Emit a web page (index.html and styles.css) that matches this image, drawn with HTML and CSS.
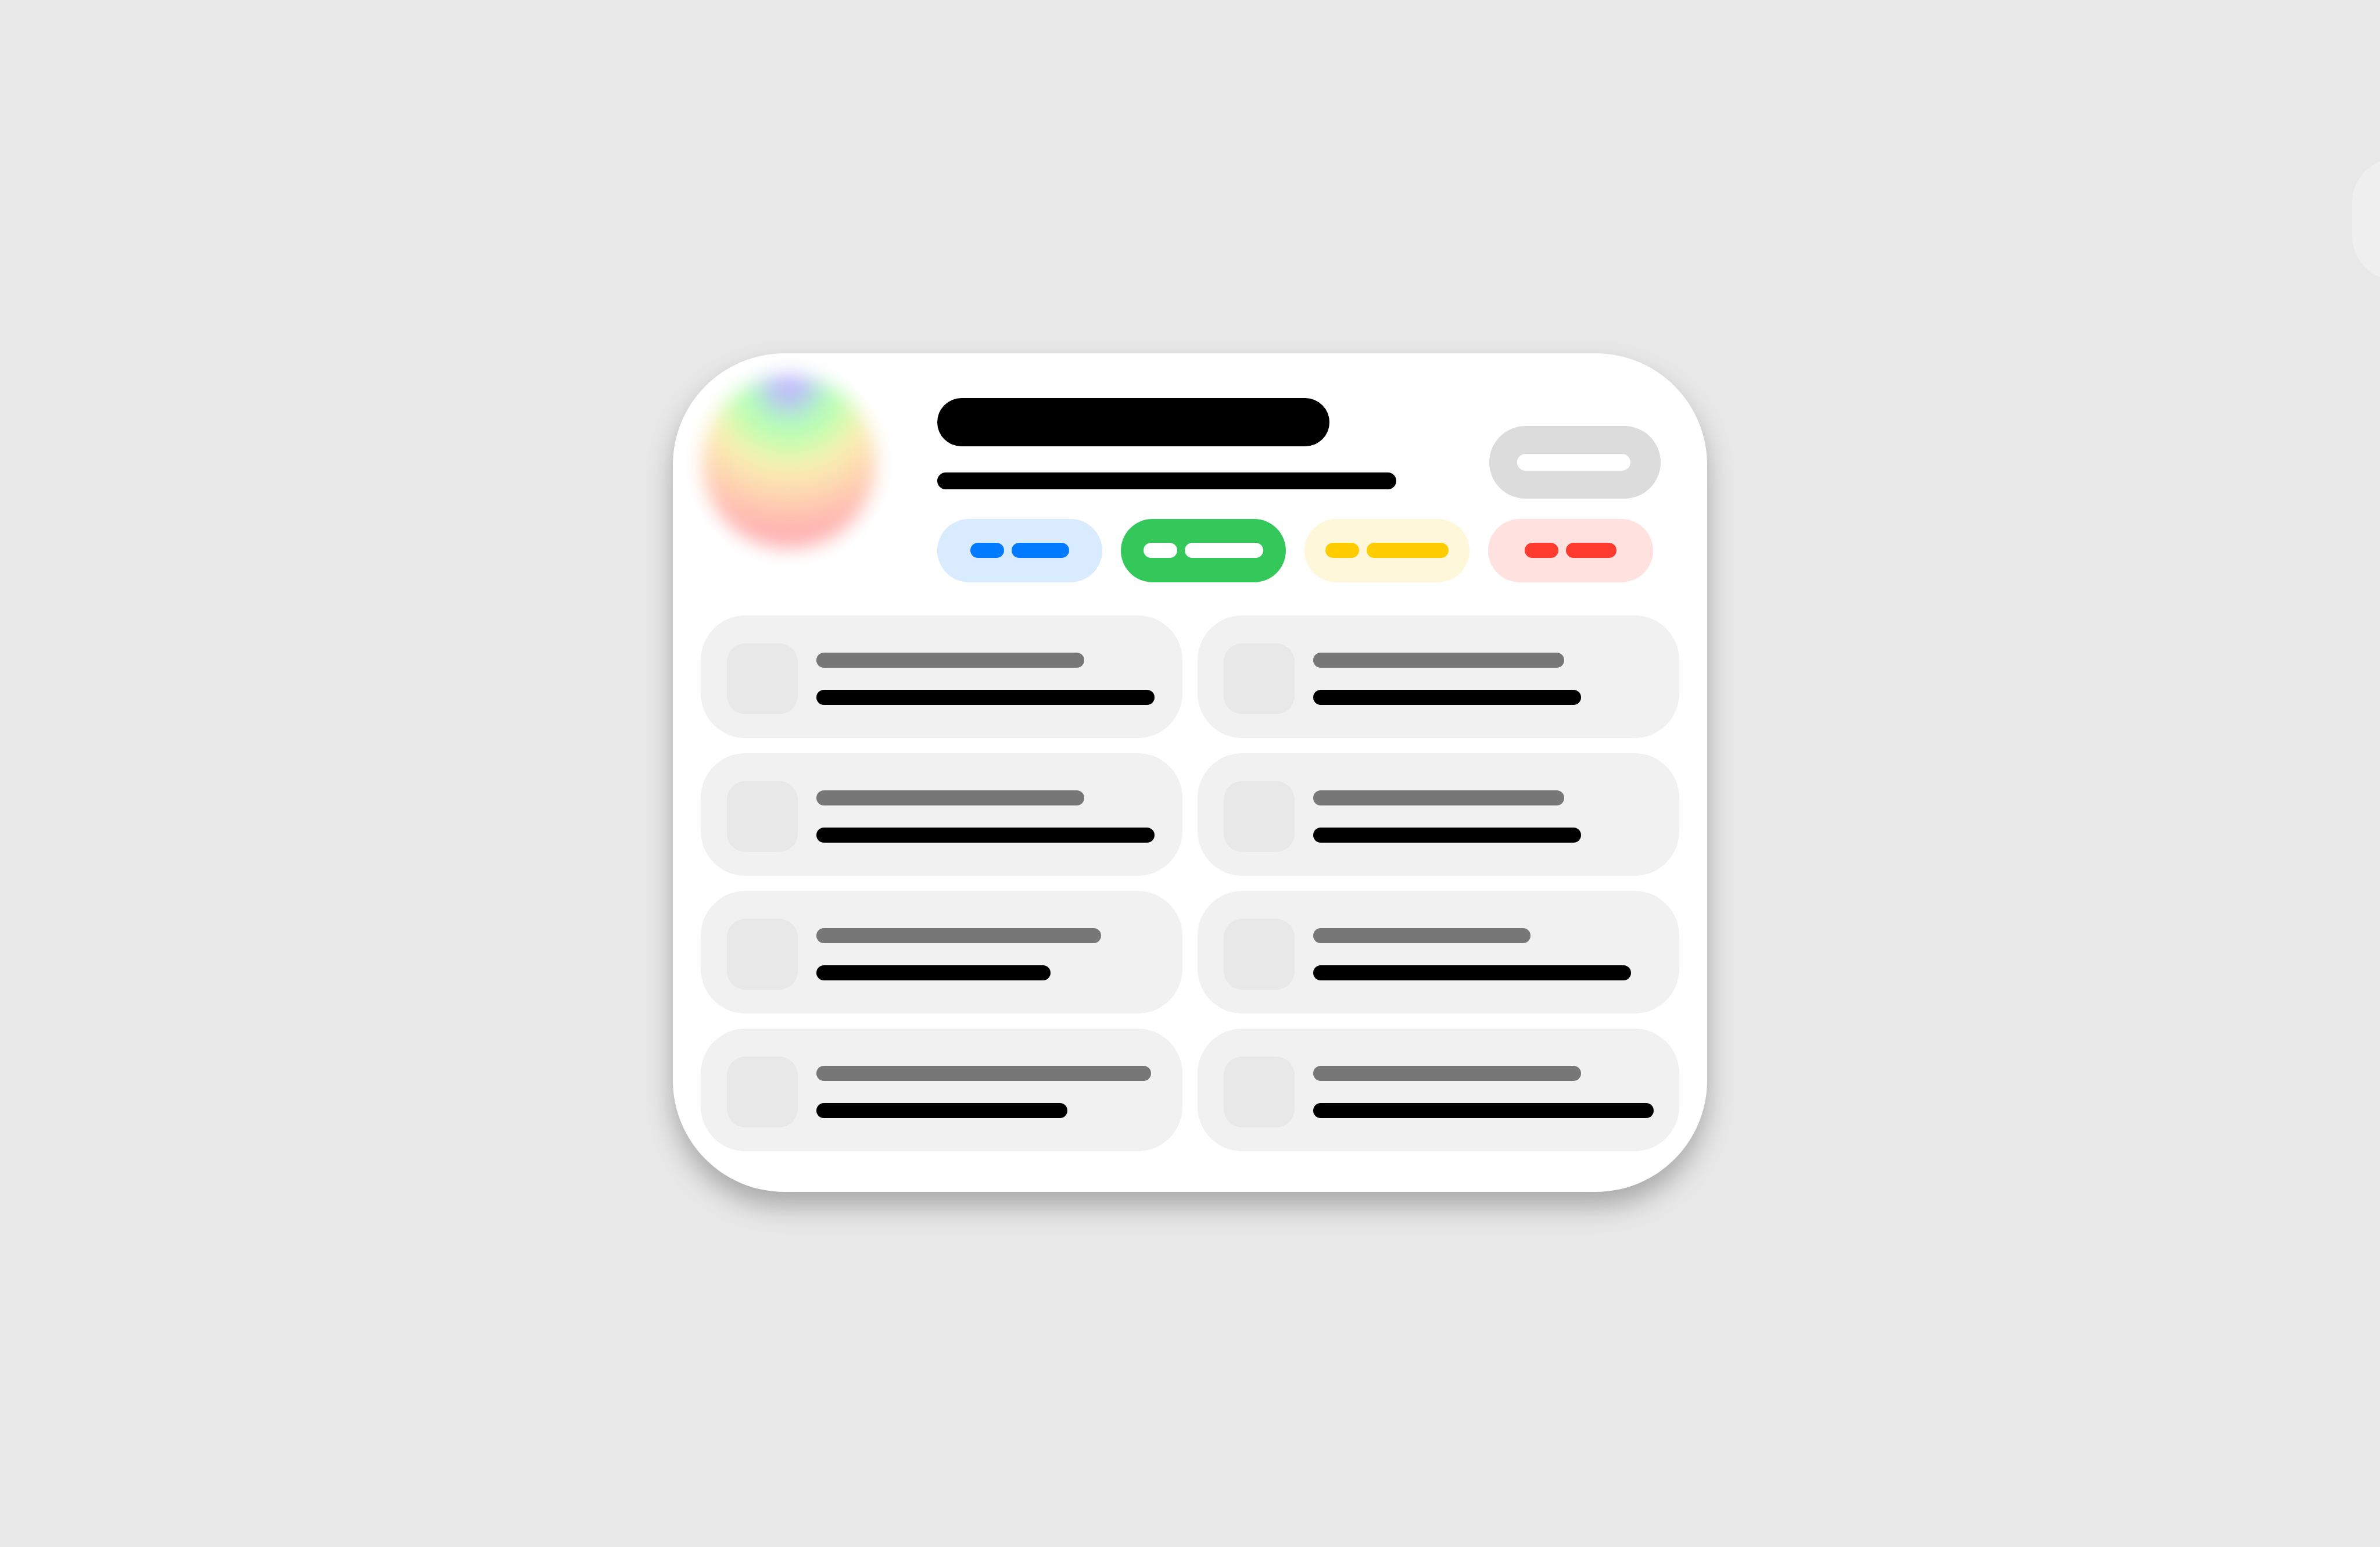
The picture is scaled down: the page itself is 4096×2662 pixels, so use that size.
FILE: index.html
```html
<!DOCTYPE html>
<html lang="en">
<head>
    <meta charset="UTF-8">
    <meta name="viewport" content="width=device-width, initial-scale=1.0">
    <title>Profile card</title>
    <link rel="stylesheet" href="styles.css">
</head>
<body>
    <main class="card">
        <header class="header">
            <div class="avatar"></div>
            <div class="intro">
                <div class="bar title"></div>
                <div class="bar subtitle"></div>
                <div class="tags">
                    <button class="tag blue" aria-label="Blue filter">
                        <span class="bar count"></span>
                        <span class="bar" style="width: 99px;"></span>
                    </button>
                    <button class="tag green" aria-label="Green filter">
                        <span class="bar count"></span>
                        <span class="bar" style="width: 135px;"></span>
                    </button>
                    <button class="tag yellow" aria-label="Yellow filter">
                        <span class="bar count"></span>
                        <span class="bar" style="width: 141px;"></span>
                    </button>
                    <button class="tag red" aria-label="Red filter">
                        <span class="bar count"></span>
                        <span class="bar" style="width: 87px;"></span>
                    </button>
                </div>
            </div>
            <button class="action" aria-label="Action"><span class="bar"></span></button>
        </header>
        <section class="grid">
            <div class="item">
                <div class="icon"></div>
                <div class="lines">
                    <div class="bar label" style="width: 461px;"></div>
                    <div class="bar" style="width: 582px;"></div>
                </div>
            </div>
            <div class="item">
                <div class="icon"></div>
                <div class="lines">
                    <div class="bar label" style="width: 432px;"></div>
                    <div class="bar" style="width: 461px;"></div>
                </div>
            </div>
            <div class="item">
                <div class="icon"></div>
                <div class="lines">
                    <div class="bar label" style="width: 461px;"></div>
                    <div class="bar" style="width: 582px;"></div>
                </div>
            </div>
            <div class="item">
                <div class="icon"></div>
                <div class="lines">
                    <div class="bar label" style="width: 432px;"></div>
                    <div class="bar" style="width: 461px;"></div>
                </div>
            </div>
            <div class="item">
                <div class="icon"></div>
                <div class="lines">
                    <div class="bar label" style="width: 490px;"></div>
                    <div class="bar" style="width: 403px;"></div>
                </div>
            </div>
            <div class="item">
                <div class="icon"></div>
                <div class="lines">
                    <div class="bar label" style="width: 374px;"></div>
                    <div class="bar" style="width: 547px;"></div>
                </div>
            </div>
            <div class="item">
                <div class="icon"></div>
                <div class="lines">
                    <div class="bar label" style="width: 576px;"></div>
                    <div class="bar" style="width: 432px;"></div>
                </div>
            </div>
            <div class="item">
                <div class="icon"></div>
                <div class="lines">
                    <div class="bar label" style="width: 461px;"></div>
                    <div class="bar" style="width: 586px;"></div>
                </div>
            </div>
        </section>
    </main>
    <div class="peek"></div>
</body>
</html>
```
FILE: styles.css
```css
* {
    box-sizing: border-box;
}
body {
    font-family: Inter, "Liberation Sans", sans-serif;
    background-color: #e8e8e8;
    display: flex;
    justify-content: center;
    align-items: center;
    min-height: 100vh;
    margin: 0;
    padding-bottom: 4px;
    overflow-x: hidden;
    position: relative;
}
button {
    border: none;
    padding: 0;
    cursor: pointer;
}
.card {
    background-color: #fff;
    border-radius: 192px;
    box-shadow: 0 25px 45px rgba(0, 0, 0, 0.27);
    padding: 0 48px 70px;
    max-width: 1780px;
    width: 100%;
}
.header {
    display: flex;
    padding-bottom: 57px;
}
.avatar {
    width: 298px;
    height: 298px;
    margin: 38px 106px 0 3px;
    border-radius: 50%;
    background: radial-gradient(circle at 50% 5%, #3000ff 0, #2040e0 28px, #00f030 66px, #30ff00 92px, #e8d000 142px, #ff7000 198px, #ff0000 256px);
    opacity: 0.3;
    filter: blur(16px);
}
.intro {
    padding-top: 77px;
}
.bar {
    display: block;
    height: 26px;
    border-radius: 13px;
    background-color: #000;
}
.title {
    width: 675px;
    height: 83px;
    border-radius: 42px;
}
.subtitle {
    width: 790px;
    height: 29px;
    border-radius: 15px;
    margin: 45px 0 51px;
}
.tags {
    display: flex;
    gap: 32px;
}
.tag {
    display: flex;
    justify-content: center;
    align-items: center;
    gap: 13px;
    width: 284px;
    height: 109px;
    border-radius: 55px;
}
.count {
    width: 58px;
}
.blue {
    background-color: #d9ebff;
}
.blue .bar {
    background-color: #007aff;
}
.green {
    background-color: #34c759;
}
.green .bar {
    background-color: #fff;
}
.yellow {
    background-color: #fff7d9;
}
.yellow .bar {
    background-color: #ffcc00;
}
.red {
    background-color: #ffe2e0;
}
.red .bar {
    background-color: #ff3b30;
}
/* sits beside the title, its right part above the last tag */
.action {
    width: 295px;
    height: 125px;
    padding: 48px;
    margin: 125px 0 0 -282px;
    border-radius: 63px;
    background-color: #dcdcdc;
}
.action .bar {
    width: 195px;
    height: 29px;
    border-radius: 15px;
    background-color: #fff;
}
.grid {
    display: grid;
    grid-template-columns: 1fr 1fr;
    gap: 26px;
}
.item {
    display: flex;
    align-items: center;
    gap: 32px;
    padding: 48px 40px 41px 45px;
    border-radius: 77px;
    background-color: #f1f1f1;
}
.icon {
    width: 122px;
    height: 122px;
    border-radius: 32px;
    background-color: #e8e8e8;
}
.lines {
    display: flex;
    flex-direction: column;
    gap: 38px;
}
.label {
    background-color: #777;
}
/* next panel waiting at the edge of the screen */
.peek {
    position: absolute;
    top: 272px;
    right: -160px;
    width: 208px;
    height: 211px;
    border-radius: 77px;
    background-color: #efefef;
}
```
